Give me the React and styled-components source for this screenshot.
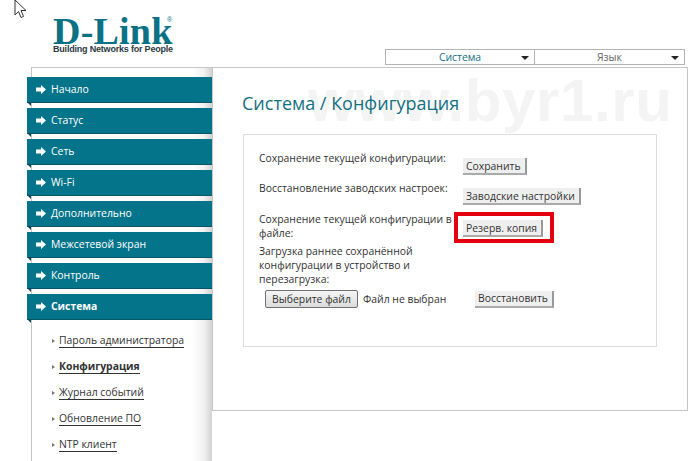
import styled, { createGlobalStyle } from "styled-components";

const GlobalStyle = createGlobalStyle`
  html, body {
    margin: 0;
    padding: 0;
    background: #fff;
  }
  body {
    font-family: "Open Sans", "Liberation Sans", sans-serif;
    font-size: 10.4px;
    color: #333;
  }
`;

const Page = styled.div`
  position: relative;
  width: 700px;
  height: 461px;
  overflow: hidden;
  background: #fff;
`;

const Cursor = styled.svg`
  position: absolute;
  left: 14px;
  top: 0;
`;

const Header = styled.header`
  height: 67px;
  display: flex;
  justify-content: space-between;
  align-items: flex-end;
  padding: 0 15px 2px 53px;
  box-sizing: border-box;
`;

const Logo = styled.div`
  position: relative;
  width: 120px;
  align-self: flex-start;
  padding-top: 18px;
`;

const LogoName = styled.div`
  font-family: "Liberation Serif", serif;
  font-weight: 700;
  font-size: 38px;
  line-height: 26px;
  letter-spacing: 0.2px;
  color: #0b7286;
  white-space: nowrap;
`;

const LogoMark = styled.span`
  position: absolute;
  left: 114px;
  top: 16px;
  font-family: "Liberation Sans", sans-serif;
  font-size: 7px;
  line-height: 8px;
  color: #0b7286;
`;

const LogoTag = styled.div`
  font-family: "Liberation Sans", sans-serif;
  font-weight: 700;
  font-size: 9px;
  line-height: 10px;
  letter-spacing: -0.2px;
  color: #2b3a40;
  white-space: nowrap;
`;

const TopMenu = styled.nav`
  display: flex;
`;

const TopItem = styled.div`
  position: relative;
  width: 150px;
  height: 16px;
  box-sizing: border-box;
  border: 1px solid #b4b4b4;
  text-align: center;
  line-height: 14px;
  color: ${(p) => p.$color};
  & + & {
    border-left: none;
  }
`;

const Caret = styled.span`
  position: absolute;
  right: 5px;
  top: 6px;
  border-left: 4px solid transparent;
  border-right: 4px solid transparent;
  border-top: 4px solid #222;
`;

const Frame = styled.div`
  display: flex;
  width: 657px;
  margin-left: 31px;
  border-top: 1px solid #c6c6c6;
`;

const Sidebar = styled.aside`
  width: 181px;
  height: 393px;
  flex: none;
  box-sizing: border-box;
  padding-top: 9px;
  border-left: 1px solid #c6c6c6;
  background: linear-gradient(to right, #fff 160px, #f1f1f1 172px, #d2d2d2 180px);
`;

const MenuBar = styled.div`
  position: relative;
  height: 26px;
  margin: 0 0 5px -5px;
  display: flex;
  align-items: center;
  gap: 5px;
  padding-left: 9px;
  box-sizing: border-box;
  background: #04748a;
  border-bottom: 1px solid #0a5666;
  color: #fff;
  font-weight: ${(p) => (p.$active ? 700 : 400)};
  &::after {
    content: "";
    position: absolute;
    left: 0;
    top: 25px;
    border-top: 4px solid #0a4a58;
    border-left: 4px solid transparent;
  }
`;

const MenuLabel = styled.span`
  margin-bottom: 2px;
`;

const ArrowIcon = styled.svg`
  flex: none;
`;

const SubMenu = styled.ul`
  list-style: none;
  margin: 0;
  padding: 3px 0 0 20px;
`;

const SubItem = styled.li`
  height: 26px;
  display: flex;
  align-items: center;
  gap: 4px;
`;

const Dot = styled.span`
  border-left: 3px solid #777;
  border-top: 2px solid transparent;
  border-bottom: 2px solid transparent;
`;

const SubLink = styled.a`
  color: #333;
  border-bottom: 1px solid #333;
  line-height: 13px;
  font-weight: ${(p) => (p.$active ? 700 : 400)};
`;

const Main = styled.main`
  position: relative;
  width: 476px;
  height: 343px;
  flex: none;
  box-sizing: border-box;
  padding: 24px 30px 0 30px;
  background: #fff;
  border-left: 1px solid #c6c6c6;
  border-right: 1px solid #c6c6c6;
  border-bottom: 1px solid #c6c6c6;
`;

const Watermark = styled.div`
  position: absolute;
  left: 95px;
  top: -3px;
  font-family: "Liberation Sans", sans-serif;
  font-size: 60px;
  font-weight: 700;
  letter-spacing: 0.6px;
  line-height: 72px;
  color: #f4f4f4;
  white-space: nowrap;
`;

const Title = styled.h1`
  position: relative;
  margin: -1px 0 0 -1px;
  height: 43px;
  font-size: 18px;
  line-height: 24px;
  font-weight: 400;
  color: #13707f;
`;

const Box = styled.section`
  width: 414px;
  height: 213px;
  box-sizing: border-box;
  border: 1px solid #dcdcdc;
  padding: 16px 15px 0;
  position: relative;
`;

const Row = styled.div`
  display: flex;
  align-items: flex-start;
  margin-bottom: ${(p) => p.$gap}px;
`;

const Label = styled.div`
  width: 204px;
  flex: none;
  line-height: 14px;
  padding-right: 2px;
  box-sizing: border-box;
`;

const Button = styled.button`
  height: 17px;
  margin-top: ${(p) => p.$top || 0}px;
  padding: 0 4px 0 3px;
  background: #efefef;
  border: none;
  border-right: 2px solid #999;
  border-bottom: 2px solid #aaa;
  font: inherit;
  color: #333;
  line-height: 14px;
  white-space: nowrap;
`;

const Highlighted = styled.div`
  position: relative;
  display: inline-flex;
  &::after {
    content: "";
    position: absolute;
    left: -9px;
    top: 0;
    width: 100px;
    height: 31px;
    box-sizing: border-box;
    border: 4px solid #e3000f;
  }
`;

const FileRow = styled.div`
  display: flex;
  align-items: center;
  margin-left: 6px;
`;

const FileButton = styled.button`
  width: 93px;
  height: 18px;
  padding: 0;
  border: 1px solid #707070;
  border-radius: 2px;
  background: linear-gradient(#f5f5f5, #dcdcdc);
  font: inherit;
  color: #333;
  white-space: nowrap;
`;

const FileName = styled.span`
  width: 117px;
  flex: none;
  padding-left: 5px;
  box-sizing: border-box;
`;

const menu = ["Начало", "Статус", "Сеть", "Wi-Fi", "Дополнительно", "Межсетевой экран", "Контроль"];
const subMenu = ["Пароль администратора", "Конфигурация", "Журнал событий", "Обновление ПО", "NTP клиент"];

const Arrow = () => (
  <ArrowIcon width="10" height="9" viewBox="0 0 10 9">
    <path d="M0 2.5h5V0l5 4.5L5 9V6.5H0z" fill="#fff" />
  </ArrowIcon>
);

export default function App() {
  return (
    <Page>
      <GlobalStyle />
      <Header>
        <Logo>
          <LogoName>D-Link</LogoName>
          <LogoMark>®</LogoMark>
          <LogoTag>Building Networks for People</LogoTag>
        </Logo>
        <TopMenu>
          <TopItem $color="#13707f">Система<Caret /></TopItem>
          <TopItem $color="#666">Язык<Caret /></TopItem>
        </TopMenu>
      </Header>
      <Frame>
        <Sidebar>
          {menu.map((item) => (
            <MenuBar key={item}><Arrow /><MenuLabel>{item}</MenuLabel></MenuBar>
          ))}
          <MenuBar $active><Arrow /><MenuLabel>Система</MenuLabel></MenuBar>
          <SubMenu>
            {subMenu.map((item) => (
              <SubItem key={item}>
                <Dot />
                <SubLink $active={item === "Конфигурация"}>{item}</SubLink>
              </SubItem>
            ))}
          </SubMenu>
        </Sidebar>
        <Main>
          <Watermark>www.byr1.ru</Watermark>
          <Title>Система / Конфигурация</Title>
          <Box>
            <Row $gap={6}>
              <Label>Сохранение текущей конфигурации:</Label>
              <Button $top={7}>Сохранить</Button>
            </Row>
            <Row $gap={7}>
              <Label>Восстановление заводских настроек:</Label>
              <Button $top={7}>Заводские настройки</Button>
            </Row>
            <Row $gap={4}>
              <Label>Сохранение текущей конфигурации в файле:</Label>
              <Highlighted><Button $top={8}>Резерв. копия</Button></Highlighted>
            </Row>
            <Row $gap={4}>
              <Label>Загрузка раннее сохранённой конфигурации в устройство и перезагрузка:</Label>
            </Row>
            <FileRow>
              <FileButton>Выберите файл</FileButton>
              <FileName>Файл не выбран</FileName>
              <Button>Восстановить</Button>
            </FileRow>
          </Box>
        </Main>
      </Frame>
      <Cursor width="13" height="20" viewBox="0 0 13 20">
        <path d="M1 0v15l3.5-3.5 2.5 6 2.5-1-2.5-6h5z" fill="#fff" stroke="#333" strokeWidth="1" />
      </Cursor>
    </Page>
  );
}
